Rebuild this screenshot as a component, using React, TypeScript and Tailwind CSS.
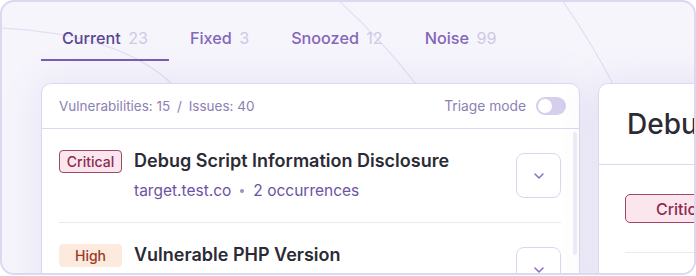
import React from 'react';

const tabs = [
  { label: 'Current', count: 23, active: true },
  { label: 'Fixed', count: 3 },
  { label: 'Snoozed', count: 12 },
  { label: 'Noise', count: 99 },
];

const issues = [
  {
    severity: 'Critical',
    badge: 'bg-[#fbe6ed] border-[#a2456a] text-[#8c2b52]',
    title: 'Debug Script Information Disclosure',
    host: 'target.test.co',
    occurrences: 2,
  },
  {
    severity: 'High',
    badge: 'bg-[#fbeadd] border-[#fbeadd] text-[#9a3a1f]',
    title: 'Vulnerable PHP Version',
    host: 'target.test.co',
    occurrences: 1,
  },
];

const Chevron = () => (
  <svg width="12" height="8" viewBox="0 0 12 8" fill="none">
    <path d="M2 2l4 4 4-4" stroke="#8a6cc6" strokeWidth="1.5" strokeLinecap="round" strokeLinejoin="round" />
  </svg>
);

export default function App() {
  return (
    <div className="w-[696px] h-[276px] bg-white font-['Inter',sans-serif]">
      <div className="relative w-[696px] h-[275px] rounded-[14px] border-2 border-[#ddd7f0] bg-[#f6f5fc] overflow-hidden">
        {/* background strokes */}
        <svg className="absolute -left-[2px] -top-[2px]" width="696" height="276" fill="none">
          <path d="M0 28 Q 120 34 172 84" stroke="#e3def3" strokeWidth="1.2" />
          <path d="M338 0 Q 380 38 416 84" stroke="#e3def3" strokeWidth="1.2" />
          <path d="M562 0 Q 590 40 613 84" stroke="#e3def3" strokeWidth="1.2" />
        </svg>

        <div className="relative">
          <nav className="flex pl-[39px]">
            {tabs.map((t) => (
              <div
                key={t.label}
                className={`px-[21px] pt-[24px] pb-[9px] border-b-2 text-[16.2px] leading-[24px] font-medium ${
                  t.active ? 'border-[#7b5cb0] text-[#5b4691]' : 'border-transparent text-[#8466bb]'
                }`}
              >
                {t.label} <span className="ml-[3px] font-normal text-[#cfc8e6]">{t.count}</span>
              </div>
            ))}
          </nav>

          <div className="flex gap-[18px] pl-[39px] mt-[22px]">
            {/* list card */}
            <div className="w-[539px] h-[230px] shrink-0 rounded-[10px] border border-[#ddd7f0] bg-white shadow-[0_0_40px_rgba(110,90,180,0.12)]">
              <div className="h-[45px] flex items-center justify-between pl-[17px] pr-[13px] border-b border-[#ddd7f0] text-[13.5px] text-[#8d80b4]">
                <span>Vulnerabilities: 15 <span className="mx-[3px]">/</span> Issues: 40</span>
                <div className="flex items-center gap-[10px]">
                  <span className="text-[13.8px]">Triage mode</span>
                  <div className="w-[30px] h-[18px] rounded-full bg-[#d5ceec] p-[2px]">
                    <div className="w-[14px] h-[14px] rounded-full bg-white" />
                  </div>
                </div>
              </div>

              <div className="flex pl-[17px]">
                <div className="flex-1">
                  {issues.map((it) => (
                    <div key={it.title} className="flex items-center pt-[20px] pb-[20px] border-b border-[#ebe8f3]">
                      <div className="flex-1 flex gap-[12px]">
                        <span
                          className={`mt-[1px] w-[63px] h-[23px] shrink-0 flex items-center justify-center rounded-[4px] border text-[14px] font-medium ${it.badge}`}
                        >
                          {it.severity}
                        </span>
                        <div>
                          <div className="text-[18px] leading-[24px] font-semibold text-[#2c2b35]">{it.title}</div>
                          <div className="mt-[7px] text-[15.5px] leading-[22px] text-[#6b52a2] flex items-center">
                            {it.host}
                            <span className="mx-[9px] w-[4px] h-[4px] rounded-full bg-[#9e8fcb]" />
                            {it.occurrences} occurrences
                          </div>
                        </div>
                      </div>
                      <button className="w-[45px] h-[45px] shrink-0 flex items-center justify-center rounded-[8px] border border-[#dcd5f0] bg-white">
                        <Chevron />
                      </button>
                    </div>
                  ))}
                </div>
                <div className="ml-[12px] mr-[2px] mt-[3px] w-[4px] h-[123px] rounded-full bg-[#eeedf4]" />
              </div>
            </div>

            {/* detail card */}
            <div className="w-[300px] h-[230px] shrink-0 rounded-[10px] border border-[#ddd7f0] bg-white shadow-[0_0_40px_rgba(110,90,180,0.14)]">
              <div className="h-[81px] flex items-center pl-[28px] border-b border-[#ddd7f0]">
                <span className="text-[28px] font-medium text-[#2c2b35] whitespace-nowrap">Debug Script Information Disclosure</span>
              </div>
              <div className="ml-[26px] pt-[29px] pb-[29px] border-b border-[#ebe8f3]">
                <span className="inline-flex w-[116px] h-[29px] items-center justify-center rounded-[5px] border border-[#a2456a] bg-[#fbe6ed] text-[16px] font-medium text-[#8c2b52]">
                  Critical
                </span>
              </div>
            </div>
          </div>
        </div>
      </div>
    </div>
  );
}
